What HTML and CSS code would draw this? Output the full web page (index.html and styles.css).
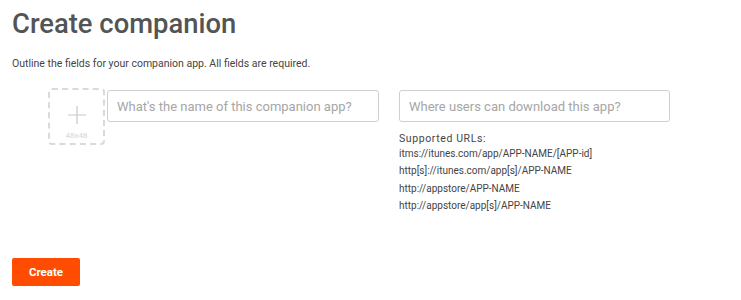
FILE: index.html
```html
<!DOCTYPE html>
<html lang="en">

<head>
  <meta charset="UTF-8">
  <meta name="viewport" content="width=device-width, initial-scale=1.0">
  <title>Create companion</title>
  <link rel="stylesheet" href="styles.css">
</head>

<body>
  <div class="page">
    <h1 class="title">Create companion</h1>
    <p class="intro">Outline the fields for your companion app. All fields are required.</p>

    <div class="form-row">
      <div class="icon-drop">
        <svg class="plus" width="18" height="18" viewBox="0 0 18 18">
          <path d="M9 0 V18 M0 9 H18" stroke="#c8c8c8" stroke-width="1.2" fill="none" />
        </svg>
        <span class="icon-size">48x48</span>
      </div>
      <input type="text" class="field field-name" placeholder="What's the name of this companion app?">

      <div class="url-col">
        <input type="text" class="field field-url" placeholder="Where users can download this app?">
        <div class="help">
          <div class="help-title">Supported URLs:</div>
          <div class="help-line">itms://itunes.com/app/APP-NAME/[APP-id]</div>
          <div class="help-line">http[s]://itunes.com/app[s]/APP-NAME</div>
          <div class="help-line">http://appstore/APP-NAME</div>
          <div class="help-line">http://appstore/app[s]/APP-NAME</div>
        </div>
      </div>
    </div>

    <button class="create-btn">Create</button>
  </div>
</body>

</html>
```

FILE: styles.css
```css
body {
  margin: 0;
  font-family: Roboto, "Liberation Sans", sans-serif;
  color: #4a4a4a;
}

.page {
  padding: 8px 12px;
}

.title {
  margin: 0;
  font-size: 27.4px;
  line-height: 32px;
  font-weight: 500;
  color: #545454;
}

.intro {
  margin: 17px 0 0;
  font-size: 10.5px;
  line-height: 14px;
  color: #444;
}

.form-row {
  display: flex;
  align-items: flex-start;
  margin: 17px 0 0 36px;
}

.icon-drop {
  width: 53px;
  height: 53px;
  border: 2px dashed #dadada;
  border-radius: 4px;
  display: flex;
  flex-direction: column;
  align-items: center;
  justify-content: flex-end;
}

.plus {
  margin-bottom: 7px;
}

.icon-size {
  font-size: 8px;
  line-height: 10px;
  color: #d4d4d4;
  margin-bottom: 2px;
}

.field {
  box-sizing: border-box;
  height: 32px;
  border: 1px solid #cfcfcf;
  border-radius: 3px;
  padding: 0 9px;
  font-family: Roboto, "Liberation Sans", sans-serif;
  font-size: 13px;
  color: #444;
  outline: none;
}

.field::placeholder {
  color: #a6a6a6;
}

.field-name {
  width: 272px;
  margin: 2px 0 0 2px;
}

.url-col {
  margin: 2px 0 0 20px;
}

.field-url {
  width: 271px;
}

.help {
  margin-top: 11px;
  font-size: 10px;
  color: #444;
}

.help-title {
  letter-spacing: 0.6px;
  font-size: 10.5px;
  line-height: 12px;
}

.help-line {
  line-height: 17.4px;
}

.create-btn {
  margin-top: 43px;
  width: 68px;
  height: 28px;
  background-color: #ff4c00;
  color: #fff;
  border: none;
  border-radius: 2px;
  font-family: Roboto, "Liberation Sans", sans-serif;
  font-size: 11.5px;
  font-weight: bold;
  cursor: pointer;
}
```
